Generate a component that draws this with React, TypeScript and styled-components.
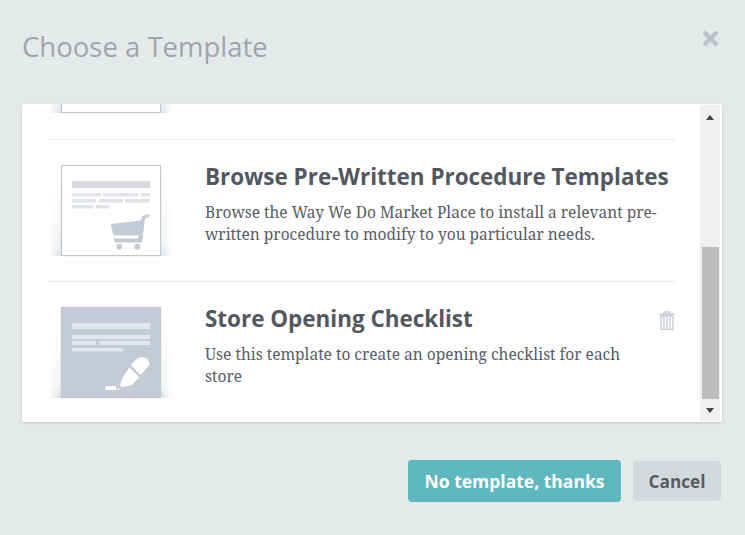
import React from "react";
import styled, { createGlobalStyle } from "styled-components";

const Global = createGlobalStyle`
  html, body { margin: 0; padding: 0; background: #e5e9ea; }
  * { box-sizing: border-box; }
`;

const Dialog = styled.div`
  width: 745px;
  height: 535px;
  display: flex;
  flex-direction: column;
  background: #e5e9ea;
  overflow: hidden;
`;

const Header = styled.header`
  height: 104px;
  padding: 28px 25px 0 22px;
  display: flex;
  justify-content: space-between;
  align-items: flex-start;
`;

const Title = styled.h1`
  margin: 0;
  font: 400 27.5px/38px "Open Sans", sans-serif;
  color: #9fa5ae;
`;

const Close = styled.button`
  border: 0;
  background: none;
  padding: 0;
  margin-top: 1px;
  width: 19px;
  height: 19px;
  display: flex;
`;

const Panel = styled.section`
  margin: 0 23px 0 22px;
  height: 318px;
  display: flex;
  background: #fff;
  box-shadow: 0 1px 2px rgba(0, 0, 0, 0.18);
`;

const List = styled.div`
  flex: 1;
  min-width: 0;
  height: 100%;
  overflow: hidden;
  padding: 0 25px 0 26px;
`;

const ClippedTop = styled.div`
  height: 35px;
  overflow: hidden;
`;

const Row = styled.article`
  height: 142px;
  border-top: 1px solid #e9ebec;
  padding-top: 25px;
  display: flex;
`;

const Thumb = styled.div<{ $cut?: boolean }>`
  width: 125px;
  height: ${(p) => (p.$cut ? "9px" : "91px")};
  flex: none;
  padding: 0 13px;
  position: relative;
  &::before {
    content: "";
    position: absolute;
    left: 0;
    right: 0;
    bottom: 0;
    height: 78px;
    background: linear-gradient(
      90deg,
      transparent 0,
      rgba(150, 160, 170, 0.34) 13px,
      rgba(150, 160, 170, 0.34) 112px,
      transparent 125px
    );
    -webkit-mask-image: linear-gradient(to top, #000 0, rgba(0, 0, 0, 0.45) 12px, transparent 100%);
    mask-image: linear-gradient(to top, #000 0, rgba(0, 0, 0, 0.45) 12px, transparent 100%);
  }
`;

const Sheet = styled.div<{ $filled?: boolean; $cut?: boolean }>`
  position: relative;
  width: 100px;
  height: ${(p) => (p.$cut ? "9px" : "91px")};
  background: ${(p) => (p.$filled ? "#c3ccd6" : "#fff")};
  border: 1px solid #bfc7cf;
  ${(p) => (p.$cut ? "border-top: 0;" : "")}
  box-shadow: 0 0 1px #c3ccd6;
`;

const Copy = styled.div`
  flex: 1;
  min-width: 0;
  padding-left: 32px;
`;

const RowTitle = styled.h2`
  margin: -4px 0 0;
  font: 700 22.45px/32px "Open Sans", sans-serif;
  color: #52585f;
  white-space: nowrap;
`;

const RowText = styled.p`
  margin: 8px 0 0;
  max-width: 453px;
  font: 400 15.5px/22px "Noto Serif", "DejaVu Serif", "Liberation Serif", serif;
  color: #575d65;
`;

const Trash = styled.div`
  position: absolute;
  right: 0;
  top: 4px;
`;

const RowBody = styled.div`
  position: relative;
  flex: 1;
  display: flex;
  min-width: 0;
`;

const Scrollbar = styled.div`
  width: 22px;
  height: 100%;
  flex: none;
  display: flex;
  flex-direction: column;
  align-items: center;
  background: #f0f0f0;
  border-top: 1px solid #fff;
  border-right: 2px solid #fff;
  border-bottom: 1px solid #fff;
  padding: 0 1px;
`;

const Arrow = styled.div<{ $down?: boolean }>`
  height: ${(p) => (p.$down ? "22px" : "24px")};
  flex: none;
  display: flex;
  align-items: center;
  justify-content: center;
  &::after {
    content: "";
    border-left: 4.5px solid transparent;
    border-right: 4.5px solid transparent;
    ${(p) => (p.$down ? "border-top: 5px solid #444;" : "border-bottom: 5px solid #444;")}
  }
`;

const Track = styled.div`
  flex: 1;
  display: flex;
  flex-direction: column;
  justify-content: flex-end;
  width: 17px;
`;

const ThumbBar = styled.div`
  height: 152px;
  background: #bdbdbd;
`;

const Footer = styled.footer`
  flex: 1;
  display: flex;
  justify-content: flex-end;
  align-items: flex-start;
  padding: 38px 24px 0 0;
  gap: 12px;
`;

const Primary = styled.button`
  width: 213px;
  height: 42px;
  border: 0;
  border-radius: 4px;
  background: #5fb7bf;
  color: #fff;
  font: 700 17.5px "Open Sans", sans-serif;
  padding: 0;
`;

const Secondary = styled.button`
  width: 88px;
  height: 40px;
  margin-top: 1px;
  border: 0;
  border-radius: 4px;
  background: #d5d9dc;
  color: #565c64;
  font: 700 17.2px "Open Sans", sans-serif;
  padding: 0;
`;

const Bars = ({ items, fill }: { items: number[][]; fill: string }) => (
  <>
    {items.map(([x, y, w, h], i) => (
      <rect key={i} x={x} y={y} width={w} height={h} fill={fill} />
    ))}
  </>
);

const CartArt = () => (
  <svg width="98" height="89" viewBox="0 0 98 89" style={{ display: "block" }}>
    <Bars fill="#d8dce1" items={[[10, 15, 78, 7]]} />
    <Bars
      fill="#e0e3e7"
      items={[
        [10, 27, 29, 3.5], [41, 27, 35, 3.5], [79, 27, 9, 3.5],
        [10, 33, 24, 3.5], [37, 33, 24, 3.5], [63, 33, 25, 3.5],
        [10, 39, 21, 3.5], [34, 39, 13, 3.5],
      ]}
    />
    <path
      d="M48.7 58 L79 54.5 L80 50.5 L86 48 Q88.5 48.5 87.5 50.5 L83 52.5 L80 76.5 L53 76.5 L51.5 72.5 L76 72.5 L76.6 69.5 L51.5 69.5 Z"
      fill="#c3ccd6"
    />
    <circle cx="57.3" cy="80.7" r="3" fill="#c3ccd6" />
    <circle cx="75.3" cy="80.7" r="3" fill="#c3ccd6" />
  </svg>
);

const PenArt = () => (
  <svg width="98" height="89" viewBox="0 0 98 89" style={{ display: "block" }}>
    <Bars fill="#e3e6ea" items={[[10, 15, 78, 6]]} />
    <Bars
      fill="#e3e6ea"
      items={[
        [10, 27, 78, 4], [10, 33, 24, 4], [37, 33, 51, 4], [10, 40, 51, 3.5],
      ]}
    />
    <path d="M68.7 57 L76 50 Q80 48.5 84 50 Q88 53 87.3 57 L78.7 67 Z" fill="#fff" />
    <path d="M67.3 59.3 L77.3 69.3 L69.7 77 L59.7 79.3 L58 77 L61.3 68.7 Z" fill="#fff" />
    <circle cx="56.5" cy="81" r="1" fill="#fff" />
    <rect x="43.3" y="78.3" width="10.7" height="3.7" fill="#fff" />
  </svg>
);

const TrashIcon = () => (
  <svg width="16" height="19" viewBox="0 0 16 19" style={{ display: "block" }}>
    <path d="M5 2.5 V1 H11 V2.5" fill="none" stroke="#c3ccd6" strokeWidth="1.4" />
    <rect x="0.5" y="2.5" width="15" height="1.6" fill="#c3ccd6" />
    <path
      d="M2 5 H14 V18.5 H2 Z M5 6 V17.5 M8 6 V17.5 M11 6 V17.5"
      fill="none"
      stroke="#c3ccd6"
      strokeWidth="1.3"
    />
  </svg>
);

export default function App() {
  return (
    <>
      <Global />
      <Dialog>
        <Header>
          <Title>Choose a Template</Title>
          <Close aria-label="Close">
            <svg width="19" height="19" viewBox="0 0 19 19">
              <path d="M2.8 2.8 L16.2 16.2 M16.2 2.8 L2.8 16.2" stroke="#c0c3c5" strokeWidth="4.4" />
            </svg>
          </Close>
        </Header>
        <Panel>
          <List>
            <ClippedTop>
              <Thumb $cut>
                <Sheet $cut />
              </Thumb>
            </ClippedTop>
            <Row>
              <Thumb>
                <Sheet>
                  <CartArt />
                </Sheet>
              </Thumb>
              <RowBody>
                <Copy>
                  <RowTitle>Browse Pre-Written Procedure Templates</RowTitle>
                  <RowText>
                    Browse the Way We Do Market Place to install a relevant pre-written procedure to modify to you particular needs.
                  </RowText>
                </Copy>
              </RowBody>
            </Row>
            <Row>
              <Thumb>
                <Sheet $filled>
                  <PenArt />
                </Sheet>
              </Thumb>
              <RowBody>
                <Copy>
                  <RowTitle>Store Opening Checklist</RowTitle>
                  <RowText>Use this template to create an opening checklist for each store</RowText>
                </Copy>
                <Trash>
                  <TrashIcon />
                </Trash>
              </RowBody>
            </Row>
          </List>
          <Scrollbar>
            <Arrow />
            <Track>
              <ThumbBar />
            </Track>
            <Arrow $down />
          </Scrollbar>
        </Panel>
        <Footer>
          <Primary>No template, thanks</Primary>
          <Secondary>Cancel</Secondary>
        </Footer>
      </Dialog>
    </>
  );
}
